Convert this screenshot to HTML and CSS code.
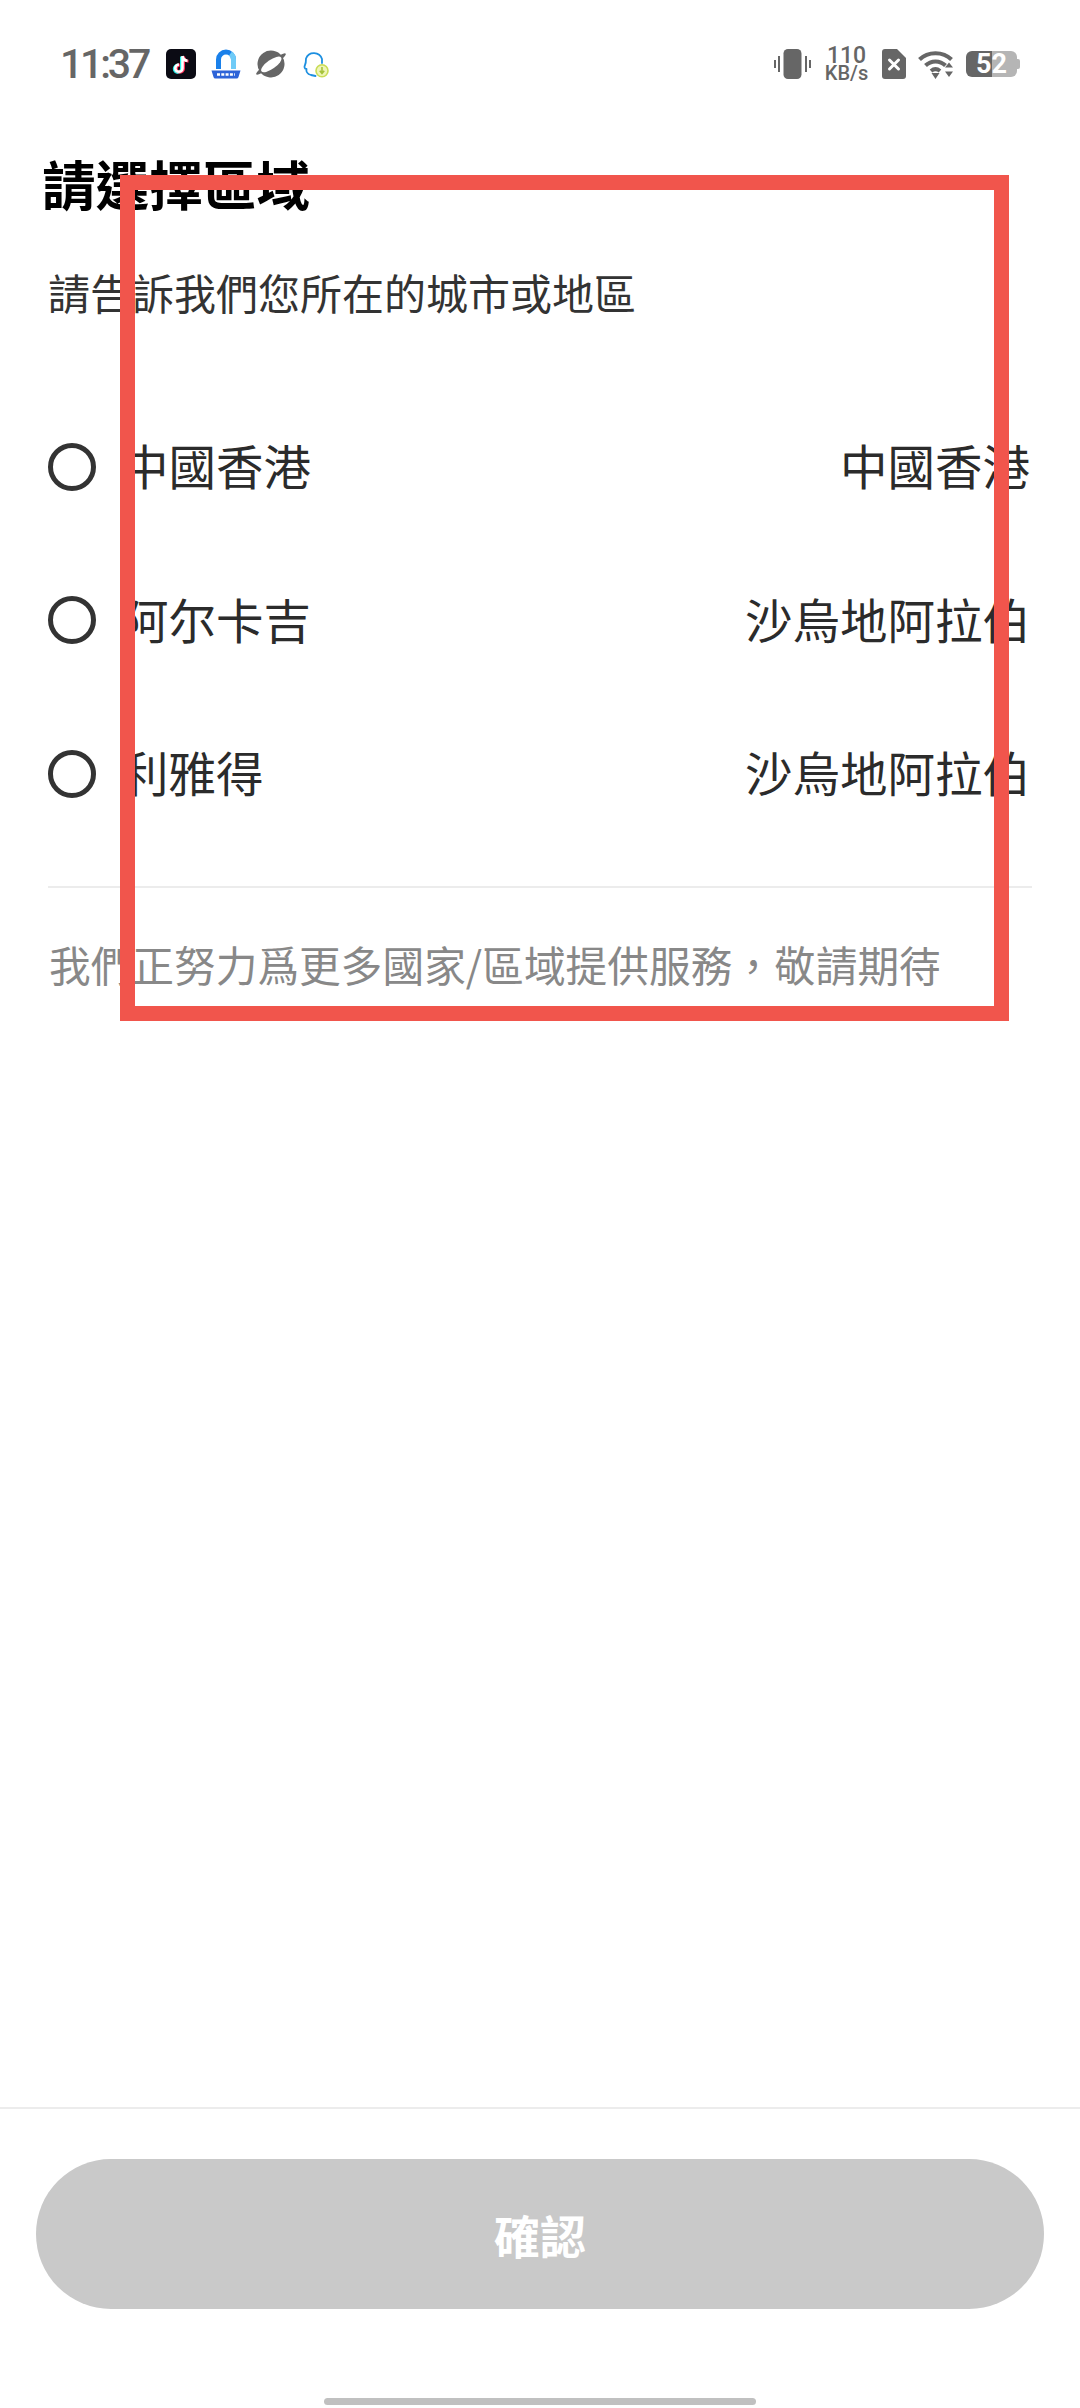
FILE: index.html
```html
<!DOCTYPE html>
<html lang="zh-Hant">
<head>
<meta charset="utf-8">
<title>請選擇區域</title>
<link rel="stylesheet" href="styles.css">
</head>
<body>
<div class="page">
  <header class="status">
    <div class="status-left">
      <span class="time">11:37</span>
      <svg class="ic-tt" viewBox="0 0 30 30"><rect width="30" height="30" rx="5" fill="#0b0b14"/><path d="M16.500 7v12.200a3.600 3.600 0 1 1-3.600-3.600" fill="none" stroke="#25f4ee" stroke-width="3" transform="translate(-1 .6)"/><path d="M16.500 7v12.200a3.600 3.600 0 1 1-3.600-3.600M16.500 7c.3 2.800 2.200 4.600 5 4.800" fill="none" stroke="#fe2c55" stroke-width="3" transform="translate(1 .4)"/><path d="M16.500 7v12.200a3.600 3.600 0 1 1-3.600-3.600M16.500 7c.3 2.800 2.200 4.600 5 4.800" fill="none" stroke="#fff" stroke-width="2.600"/></svg>
      <svg class="ic-bl" viewBox="0 0 32 30"><path d="M8.500 20V10.500a7.500 7.500 0 0 1 15 0V20" fill="none" stroke="#1a80ea" stroke-width="5"/><path d="M23.500 20V10.500a7.500 7.500 0 0 0-3-6" fill="none" stroke="#6fcbf7" stroke-width="5"/><path d="M1.500 21.500h29l-2 6.500a2 2 0 0 1-2 1.500h-21a2 2 0 0 1-2-1.500z" fill="#2d63d8"/><path d="M7 25.500h18" stroke="#fff" stroke-width="2.500" stroke-dasharray="3 1.300"/></svg>
      <svg class="ic-pl" viewBox="0 0 32 28"><g transform="rotate(-35 16 14)"><ellipse cx="16" cy="14" rx="18" ry="3" fill="#666"/><circle cx="16" cy="14" r="13.500" fill="#666"/><ellipse cx="16" cy="14.500" rx="12" ry="4.500" fill="#fff"/></g></svg>
      <svg class="ic-qq" viewBox="0 0 28 30"><path d="M19 14V10A8.500 8.500 0 0 0 3 9.500C3 13 3 14 2 16c-1 2-.5 4 1.500 4C3 22 4 25 8 26l4.500 1" fill="none" stroke="#1c8fe0" stroke-width="1.800" stroke-linecap="round" stroke-linejoin="round"/><circle cx="19" cy="21.700" r="6" fill="#eef5b8" stroke="#c9dc55" stroke-width="1.600"/><path d="M19 18v6M16.800 21.800l2.200 2.700 2.200-2.700" fill="none" stroke="#a5c23a" stroke-width="1.600"/></svg>
    </div>
    <div class="status-right">
      <svg class="ic-vib" viewBox="0 0 37 30"><rect x="9.500" y="0" width="18" height="30" rx="4.500" fill="#666"/><path d="M5 7v16M1 11v8M32 7v16M36 11v8" stroke="#666" stroke-width="2"/></svg>
      <div class="speed"><span class="speed-num">110</span><span class="speed-unit">KB/s</span></div>
      <svg class="ic-sim" viewBox="0 0 24 30"><path d="M3 0h12l9 9v18a3 3 0 0 1-3 3H3a3 3 0 0 1-3-3V3a3 3 0 0 1 3-3z" fill="#666"/><path d="M7.500 11l9 9M16.500 11l-9 9" stroke="#fff" stroke-width="3" stroke-linecap="round"/></svg>
      <svg class="ic-wifi" viewBox="0 0 37 29"><path d="M1.500 9.500C10 1 25 1 33.500 9.500" fill="none" stroke="#666" stroke-width="4"/><path d="M7.500 15.500C13 10 22 10 27.500 15.500" fill="none" stroke="#666" stroke-width="4"/><path d="M13 21c3-2.500 6-2.500 9 0" fill="none" stroke="#666" stroke-width="4"/><path d="M13.500 23h8l-4 6zM27 17.500h8l-4-5zM27 21.500h8l-4 5.500z" fill="#666"/></svg>
      <div class="battery">
        <div class="batt-body"><span class="batt-level">52</span></div>
        <span class="batt-tip"></span>
      </div>
    </div>
  </header>

  <main class="content">
    <h1 class="title">請選擇區域</h1>
    <p class="subtitle">請告訴我們您所在的城市或地區</p>
    <ul class="regions">
      <li class="region"><span class="radio"></span><span class="city">中國香港</span><span class="country">中國香港</span></li>
      <li class="region"><span class="radio"></span><span class="city">阿尔卡吉</span><span class="country">沙烏地阿拉伯</span></li>
      <li class="region"><span class="radio"></span><span class="city">利雅得</span><span class="country">沙烏地阿拉伯</span></li>
    </ul>
    <div class="divider"></div>
    <p class="note">我們正努力爲更多國家/區域提供服務<span class="note-comma">，</span>敬請期待</p>
  </main>

  <footer class="footer">
    <button class="confirm" type="button">確認</button>
    <div class="home-bar"></div>
  </footer>

  <div class="highlight"></div>
</div>
</body>
</html>
```

FILE: styles.css
```css
* { box-sizing: border-box; }
html, body { margin: 0; padding: 0; background: #fff; }
body { font-family: "Noto Sans CJK TC", "Noto Sans", sans-serif; }

.page {
  position: relative;
  width: 1080px;
  height: 2408px;
  display: flex;
  flex-direction: column;
  overflow: hidden;
}

.status {
  height: 128px;
  padding: 0 60px;
  display: flex;
  align-items: center;
  justify-content: space-between;
  color: #666;
}
.status-left, .status-right { display: flex; align-items: center; }
.time { font-family: Roboto, sans-serif; font-weight: 500; font-size: 41px; letter-spacing: -3.2px; line-height: 1; width: 106px; }
.ic-tt { width: 30px; height: 30px; margin-right: 14px; }
.ic-bl { width: 32px; height: 30px; margin-right: 13px; }
.ic-pl { width: 32px; height: 28px; margin-right: 16px; }
.ic-qq { width: 28px; height: 30px; }
.ic-vib { width: 37px; height: 30px; margin-right: 14px; }
.speed { width: 43px; margin-right: 14px; display: flex; flex-direction: column; align-items: center; font-family: Roboto, sans-serif; font-weight: 500; line-height: 1; }
.speed-num { font-size: 23px; height: 18px; line-height: 18px; }
.speed-unit { font-size: 20px; height: 16px; line-height: 16px; white-space: nowrap; }
.ic-sim { width: 24px; height: 30px; margin-right: 12px; }
.ic-wifi { width: 37px; height: 29px; margin-right: 11px; }
.battery { display: flex; align-items: center; }
.batt-body {
  width: 51px;
  height: 26px;
  border-radius: 6px;
  background: linear-gradient(to right, #666 0 51%, #b5b5b5 51% 100%);
  display: flex;
  align-items: center;
  justify-content: center;
}
.batt-level { color: #fff; font-family: Roboto, sans-serif; font-weight: 700; font-size: 27px; line-height: 1; }
.batt-tip { width: 3px; height: 10px; background: #b5b5b5; border-radius: 0 2px 2px 0; }

.content { flex: 1; padding: 0 48px; display: flex; flex-direction: column; }
.title { margin: 22px 0 0 -6px; font-size: 53.600px; line-height: 66px; font-weight: 700; color: #000; }
.subtitle { margin: 46px 0 0; font-size: 42px; line-height: 60px; color: #333; }
.regions { list-style: none; margin: 68px 0 0; padding: 0; }
.region { height: 153.500px; display: flex; align-items: center; font-size: 47.500px; color: #2b2b2b; }
.radio { width: 48px; height: 48px; border: 5px solid #333; border-radius: 50%; flex: none; margin-right: 25px; }
.city { flex: 1; line-height: 60px; margin-bottom: 3px; }
.country { line-height: 60px; margin-right: 2px; margin-bottom: 3px; }
.divider { margin-top: 35px; height: 2px; background: #ececec; flex: none; }
.note { margin: 46px 0 0 1px; font-size: 41.700px; line-height: 60px; color: #888; white-space: nowrap; }
.note-comma { font-family: "Noto Sans CJK SC", sans-serif; }

.footer { height: 301px; border-top: 2px solid #ececec; padding: 50px 36px 0; display: flex; flex-direction: column; align-items: center; }
.confirm {
  width: 100%;
  height: 150px;
  flex: none;
  border: 0;
  border-radius: 75px;
  background: #c9c9c9;
  color: #fff;
  font-family: inherit;
  font-size: 46px;
  font-weight: 700;
  padding: 0;
}
.home-bar { width: 432px; height: 7px; margin-top: 89px; border-radius: 4px; background: #c0c0c0; flex: none; }

.highlight {
  position: absolute;
  left: 120px;
  top: 175px;
  width: 889px;
  height: 846px;
  border: 15px solid #f1554c;
  pointer-events: none;
}
```
